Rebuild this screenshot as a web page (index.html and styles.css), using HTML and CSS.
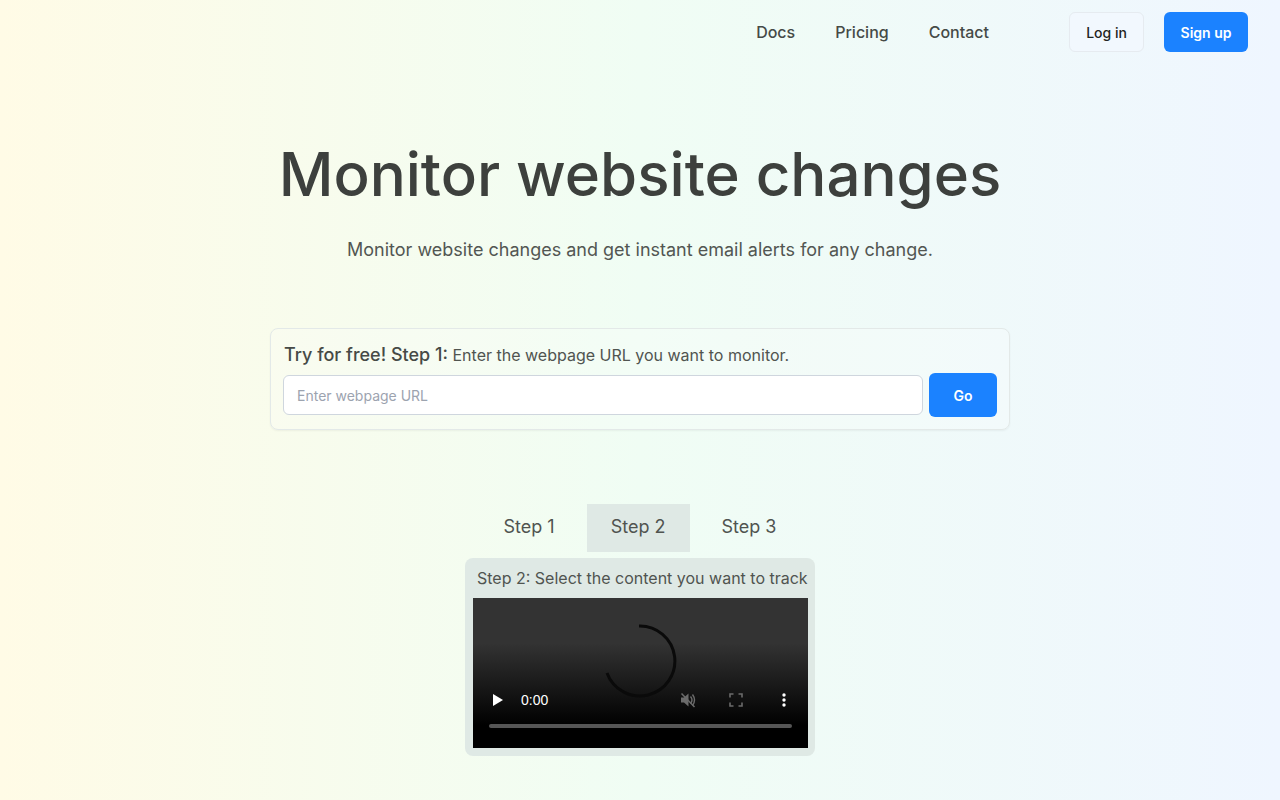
FILE: index.html
```html
<!DOCTYPE html>
<html>
  <head>
    <title>Monitor website changes</title>
    <link rel="stylesheet" href="styles.css">
  </head>
  <body>
    <header class="navbar">
      <nav class="nav-links">
        <a href="#">Docs</a>
        <a href="#">Pricing</a>
        <a href="#">Contact</a>
      </nav>
      <div class="nav-buttons">
        <a class="btn btn-light" href="#">Log in</a>
        <a class="btn btn-primary" href="#">Sign up</a>
      </div>
    </header>

    <main class="content">
      <h1>Monitor website changes</h1>
      <p class="subtitle">Monitor website changes and get instant email alerts for any change.</p>

      <div class="try-card">
        <div class="try-label"><strong>Try for free! Step 1:</strong> Enter the webpage URL you want to monitor.</div>
        <div class="try-row">
          <input type="text" placeholder="Enter webpage URL" />
          <button class="go-btn">Go</button>
        </div>
      </div>

      <div class="tabs">
        <div class="tab">Step 1</div>
        <div class="tab active">Step 2</div>
        <div class="tab">Step 3</div>
      </div>

      <div class="step-panel">
        <div class="step-title">Step 2: Select the content you want to track</div>
        <div class="player">
          <svg class="spinner" width="74" height="74" viewBox="0 0 74 74">
            <path d="M36 2 A35 35 0 1 1 4 49" fill="none" stroke="#0a0a0a" stroke-width="3" />
          </svg>
          <div class="controls">
            <div class="control-row">
              <svg class="ctl-play" width="12" height="14" viewBox="0 0 12 14"><path d="M1 1 L11 7 L1 13 Z" fill="#fff" /></svg>
              <span class="time">0:00</span>
              <svg class="ctl-mute" width="18" height="18" viewBox="0 0 18 18">
                <path d="M2 6.5 H5 L9.5 2.5 V15.5 L5 11.5 H2 Z" fill="#6b6b6b" />
                <path d="M11.5 5.5 Q14.5 9 11.5 12.5 M13.5 3.5 Q17.5 9 13.5 14.5" fill="none" stroke="#6b6b6b" stroke-width="1.4" />
                <path d="M2.5 2.5 L15.5 16" stroke="#6b6b6b" stroke-width="1.5" />
              </svg>
              <svg class="ctl-full" width="14" height="14" viewBox="0 0 14 14">
                <path d="M1 4.5 V1 H4.5 M9.5 1 H13 V4.5 M13 9.5 V13 H9.5 M4.5 13 H1 V9.5" fill="none" stroke="#6b6b6b" stroke-width="1.6" />
              </svg>
              <svg class="ctl-more" width="4" height="14" viewBox="0 0 4 14">
                <circle cx="2" cy="2" r="1.7" fill="#fff" />
                <circle cx="2" cy="7" r="1.7" fill="#fff" />
                <circle cx="2" cy="12" r="1.7" fill="#fff" />
              </svg>
            </div>
            <div class="progress"></div>
          </div>
        </div>
      </div>
    </main>
  </body>
</html>
```

FILE: styles.css
```css
* {
  box-sizing: border-box;
}
html,
body {
  height: 100%;
}
body {
  margin: 0;
  height: 800px;
  overflow: hidden;
  font-family: Inter, "Noto Sans", sans-serif;
  color: #3f423f;
  background: linear-gradient(to right, #fffbe6, #f0fdf4 50%, #eff6ff);
}
a {
  text-decoration: none;
  color: inherit;
}

.navbar {
  display: flex;
  justify-content: flex-end;
  align-items: center;
  height: 64px;
  padding: 0 32px;
}
.nav-links {
  display: flex;
  gap: 40px;
  margin-right: 80px;
  font-size: 16px;
  font-weight: 500;
  color: #454a47;
}
.nav-buttons {
  display: flex;
  gap: 20px;
}
.btn {
  display: flex;
  align-items: center;
  justify-content: center;
  height: 40px;
  border-radius: 6px;
  font-size: 14px;
  font-weight: 500;
}
.btn-light {
  width: 75px;
  background: #f2f8fe;
  border: 1px solid #e6ebf0;
  color: #1f2421;
}
.btn-primary {
  width: 84px;
  background: #1b82ff;
  color: #fff;
  font-weight: 600;
}

.content {
  display: flex;
  flex-direction: column;
  align-items: center;
}
h1 {
  margin: 70px 0 0;
  font-size: 60px;
  line-height: 80px;
  font-weight: 500;
  color: #3d403d;
}
.subtitle {
  margin: 22px 0 0;
  font-size: 18px;
  line-height: 28px;
  color: #525652;
}

.try-card {
  width: 740px;
  margin-top: 64px;
  padding: 14px 12px 12px;
  border: 1px solid #e3e9e8;
  border-radius: 8px;
  background: rgba(255, 255, 255, 0.2);
  box-shadow: 0 1px 2px rgba(0, 0, 0, 0.05);
}
.try-label {
  margin-left: 1px;
  font-size: 16px;
  line-height: 24px;
  color: #505450;
}
.try-label strong {
  font-size: 18px;
  font-weight: 500;
  color: #464a46;
}
.try-row {
  display: flex;
  align-items: center;
  gap: 6px;
  margin-top: 6px;
}
.try-row input {
  flex: 1;
  height: 40px;
  padding: 0 13px;
  border: 1px solid #cfd6de;
  border-radius: 6px;
  background: #fff;
  font-family: inherit;
  font-size: 14px;
}
.try-row input::placeholder {
  color: #9ca3af;
}
.go-btn {
  width: 68px;
  height: 44px;
  border: none;
  border-radius: 6px;
  background: #1b82ff;
  color: #fff;
  font-family: inherit;
  font-size: 14px;
  font-weight: 600;
}

.tabs {
  display: flex;
  margin-top: 74px;
}
.tab {
  padding: 0 32px;
  height: 48px;
  line-height: 46px;
  font-size: 18px;
  color: #505450;
}
.tab.active {
  padding: 0 24px;
  background: #dfe9e5;
}

.step-panel {
  width: 350px;
  height: 198px;
  margin-top: 6px;
  padding: 8px;
  border-radius: 8px;
  background: #dfe9e5;
}
.step-title {
  height: 32px;
  margin-left: 4px;
  font-size: 16px;
  line-height: 24px;
  white-space: nowrap;
  color: #505450;
}
.player {
  position: relative;
  width: 335px;
  height: 150px;
  background: linear-gradient(to bottom, #333 0%, #333 30%, #000 85%);
}
.spinner {
  position: absolute;
  left: 130px;
  top: 26px;
}
.controls {
  position: absolute;
  left: 16px;
  right: 16px;
  bottom: 20px;
}
.control-row {
  display: flex;
  align-items: center;
  height: 20px;
}
.ctl-play {
  margin-left: 3px;
}
.time {
  margin-left: 17px;
  font-family: "Liberation Sans", Arial, sans-serif;
  font-size: 14px;
  color: #fff;
}
.ctl-mute {
  margin-left: auto;
}
.ctl-full {
  margin-left: 32px;
}
.ctl-more {
  margin-left: 39px;
  margin-right: 6px;
}
.progress {
  height: 4px;
  margin-top: 14px;
  border-radius: 2px;
  background: #555;
}
```
